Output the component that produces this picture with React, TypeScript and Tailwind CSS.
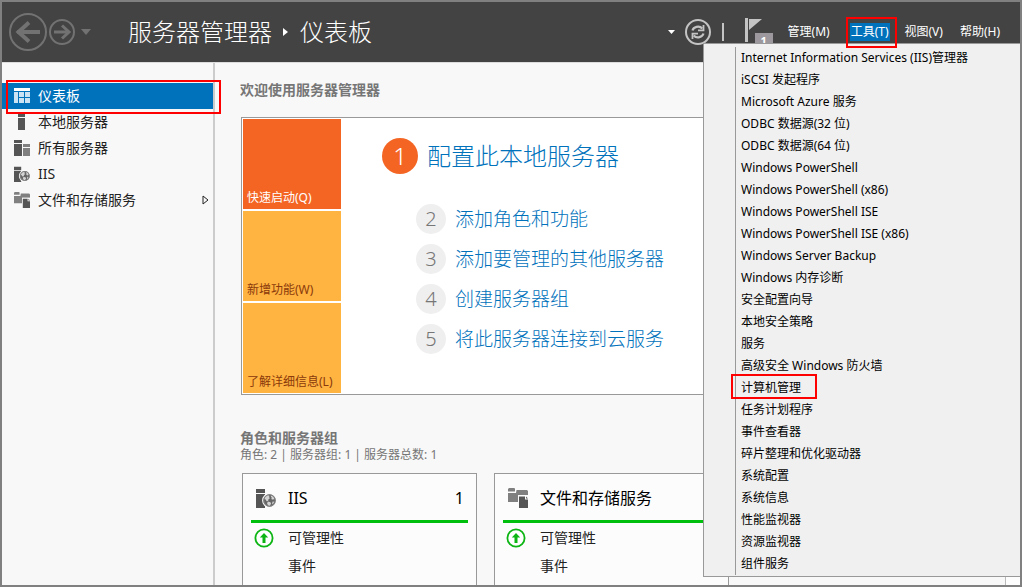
import React from "react";

const tools = [
  "Internet Information Services (IIS)管理器",
  "iSCSI 发起程序",
  "Microsoft Azure 服务",
  "ODBC 数据源(32 位)",
  "ODBC 数据源(64 位)",
  "Windows PowerShell",
  "Windows PowerShell (x86)",
  "Windows PowerShell ISE",
  "Windows PowerShell ISE (x86)",
  "Windows Server Backup",
  "Windows 内存诊断",
  "安全配置向导",
  "本地安全策略",
  "服务",
  "高级安全 Windows 防火墙",
  "计算机管理",
  "任务计划程序",
  "事件查看器",
  "碎片整理和优化驱动器",
  "系统配置",
  "系统信息",
  "性能监视器",
  "资源监视器",
  "组件服务",
];

const steps = ["添加角色和功能", "添加要管理的其他服务器", "创建服务器组", "将此服务器连接到云服务"];

function DashboardIcon() {
  return (
    <svg className="size-4 shrink-0" viewBox="0 0 16 16" shapeRendering="crispEdges" aria-hidden="true">
      <path fill="#fff" d="M0 0h16v3H0z" />
      <path fill="#cce3f3" d="M0 4h4v11H0zM5 4h5v5H5zM11 4h5v5h-5zM5 10h5v5H5zM11 10h5v5h-5z" />
    </svg>
  );
}

function ServerIcon() {
  return (
    <svg className="size-4 shrink-0" viewBox="0 0 16 16" shapeRendering="crispEdges" aria-hidden="true">
      <path fill="#555" d="M4 0h7v3H4zM4 4h7v12H4z" />
    </svg>
  );
}

function ServersIcon() {
  return (
    <svg className="size-4 shrink-0" viewBox="0 0 16 16" shapeRendering="crispEdges" aria-hidden="true">
      <path fill="#555" d="M0 0h8v3H0zM0 4h8v12H0z" />
      <path fill="#808080" d="M9 4h7v3H9zM9 8h7v8H9z" />
    </svg>
  );
}

function IisIcon({ className }: { className: string }) {
  return (
    <svg className={className} viewBox="0 0 20 20" aria-hidden="true">
      <path fill="#555" d="M0 1h9v4H0zM0 6h9v14H0z" />
      <circle cx="13.5" cy="12.5" r="7.4" fill="#fbfbfb" />
      <circle cx="13.5" cy="12.5" r="6.2" fill="#666" />
      <path
        fill="#d4d4d4"
        d="M8.4 10.5c.6-1.800 2-3 3.800-3.400l1.300.8-.6 1.300 1.200.9-1.600 1.200-.3 1.500-1.600.4-.8-1.400zM15.300 7.400c1.500.6 2.500 1.600 3.100 3.200l-1.300 1.200-1.900-.9.700-1.200-1.100-.9zM11.800 13.600l2.600.6.700 1.500-1.500 2.300-1.500-.4-1-2.200zM16.700 13.500l1.500.2-1.300 2.500-.9-.6z"
      />
      <circle cx="13.500" cy="12.500" r="5.700" fill="none" stroke="#888" strokeWidth="1" />
    </svg>
  );
}

function FilesIcon({ className }: { className: string }) {
  return (
    <svg className={className} viewBox="0 0 20 20" aria-hidden="true">
      <path fill="#808080" d="M1 0h5.500l.5 1v2.500H0V1zM8.500 2H19l1 1v11H0V5h8z" />
      <path fill="#fbfbfb" d="M10 7h10v13H10z" />
      <path fill="#555" d="M11 8.500h6v3h3V20h-9z" />
      <path fill="#555" d="M18 8.500l2 2h-2z" />
    </svg>
  );
}

function UpIcon() {
  return (
    <svg className="size-5 shrink-0" viewBox="0 0 20 20" aria-hidden="true">
      <circle cx="10" cy="10" r="8.600" fill="#fff" stroke="#0db514" strokeWidth="1.800" />
      <path fill="#0db514" d="M10 5l4.200 4.500h-2.700V15h-3V9.500H5.800z" />
    </svg>
  );
}

function Header() {
  return (
    <header className="flex h-[61px] shrink-0 items-center border-b border-[#dddddd] bg-[#434343] pl-[7px] pr-5 text-white">
      <button type="button" aria-label="后退">
        <svg className="size-[38px]" viewBox="0 0 38 38" fill="none" stroke="#727272" aria-hidden="true">
          <circle cx="19" cy="19" r="18" strokeWidth="2" />
          <path d="M8 19h23" strokeWidth="4" />
          <path d="M20 9.500L9.500 19L20 28.500" strokeWidth="4" />
        </svg>
      </button>
      <button type="button" aria-label="前进" className="ml-[2px]">
        <svg className="size-[26px]" viewBox="0 0 26 26" fill="none" stroke="#727272" aria-hidden="true">
          <circle cx="13" cy="13" r="12" strokeWidth="2" />
          <path d="M5 13h15" strokeWidth="3" />
          <path d="M13 6.500L20 13L13 19.500" strokeWidth="3" />
        </svg>
      </button>
      <button type="button" aria-label="历史记录" className="ml-[6px]">
        <svg className="h-[6px] w-[10px]" viewBox="0 0 10 6" fill="#727272" aria-hidden="true">
          <path d="M0 0h10L5 6z" />
        </svg>
      </button>
      <h1 className="ml-[37px] flex items-center text-2xl font-light">
        <span>服务器管理器</span>
        <svg className="ml-[11px] mr-[12px] h-2 w-[5px]" viewBox="0 0 5 8" fill="#fff" aria-hidden="true">
          <path d="M0 0l5 4-5 4z" />
        </svg>
        <span>仪表板</span>
      </h1>
      <div className="ml-auto flex items-center">
        <button type="button" aria-label="更多">
          <svg className="h-1 w-[7px]" viewBox="0 0 7 4" fill="#fff" aria-hidden="true">
            <path d="M0 0h7L3.500 4z" />
          </svg>
        </button>
        <button type="button" aria-label="刷新" className="ml-[10px]">
          <svg className="size-[26px]" viewBox="0 0 26 26" fill="none" stroke="#c4c4c4" aria-hidden="true">
            <circle cx="13" cy="13" r="12" strokeWidth="2" />
            <path d="M7.500 11.500c1-3.500 6.500-5.500 9.800-2M18.500 14.500c-1 3.500-6.500 5.500-9.800 2" strokeWidth="2.200" />
            <path d="M18.500 6v5.300h-5.500M7.500 20v-5.300h5.500" strokeWidth="1.800" />
          </svg>
        </button>
        <span className="ml-[11px] h-[18px] w-[2px] bg-[#c4c4c4]" />
        <button type="button" aria-label="通知" className="relative ml-[21px] h-7 w-[28px]">
          <svg className="absolute left-0 top-0 h-6 w-[18px]" viewBox="0 0 18 24" aria-hidden="true">
            <path fill="#c4c4c4" d="M0 0h3v24H0zM4 1h13L4 12z" />
          </svg>
          <span className="absolute left-[10px] top-[15px] h-4 w-[18px] bg-[#9c989e] text-center text-[11px] leading-4 font-bold">
            1
          </span>
        </button>
        <nav aria-label="菜单" className="ml-[15px] flex items-center text-xs leading-[18px]">
          <button type="button">管理(M)</button>
          <button type="button" aria-expanded="true" className="relative ml-5 bg-[#0072bc] px-px">
            工具(T)
            <span className="absolute -bottom-[7px] -left-[4px] -right-[7px] -top-[6px] z-20 border-2 border-[#ff0000]" />
          </button>
          <button type="button" className="ml-[15px]">视图(V)</button>
          <button type="button" className="ml-[17px]">帮助(H)</button>
        </nav>
      </div>
    </header>
  );
}

function NavItem({ icon, label, arrow }: { icon: React.ReactNode; label: string; arrow?: boolean }) {
  return (
    <a href="#" className="flex h-[26px] items-center gap-2 pl-3 pr-1">
      {icon}
      <span>{label}</span>
      {arrow && (
        <svg className="ml-auto h-[10px] w-[7px]" viewBox="0 0 7 10" fill="none" stroke="#222" aria-hidden="true">
          <path d="M1 1l5 4-5 4z" />
        </svg>
      )}
    </a>
  );
}

function Sidebar() {
  return (
    <nav aria-label="导航" className="w-[213px] shrink-0 border-r-2 border-[#cccccc] pt-5 text-sm leading-5 text-[#222222]">
      <a href="#" aria-current="page" className="relative flex h-[26px] items-center gap-2 bg-[#0072bc] pl-3 text-white">
        <DashboardIcon />
        <span>仪表板</span>
        <span className="absolute -bottom-[5px] -right-[8px] -top-[3px] left-1 border-2 border-[#ff0000]" />
      </a>
      <NavItem icon={<ServerIcon />} label="本地服务器" />
      <NavItem icon={<ServersIcon />} label="所有服务器" />
      <NavItem icon={<IisIcon className="size-4 shrink-0" />} label="IIS" />
      <NavItem icon={<FilesIcon className="size-4 shrink-0" />} label="文件和存储服务" arrow />
    </nav>
  );
}

function RoleCard({ icon, title, count }: { icon: React.ReactNode; title: string; count: string }) {
  return (
    <section className="w-[235px] shrink-0 border border-[#999999] bg-[#fcfcfc] px-2 pb-10 text-sm text-[#222222]">
      <h3 className="flex h-[46px] items-center pl-[5px] pr-1 pt-[2px] text-base text-black">
        {icon}
        <span className="ml-3">{title}</span>
        <span className="ml-auto">{count}</span>
      </h3>
      <div className="mb-px h-[3px] bg-[#00bf0d]" />
      <div className="flex h-7 items-center gap-[14px] pl-[3px]">
        <UpIcon />
        <a href="#">可管理性</a>
      </div>
      <div className="flex h-7 items-center pl-[37px]">
        <a href="#">事件</a>
      </div>
    </section>
  );
}

function ToolsMenu() {
  return (
    <div className="absolute right-0 top-[41px] z-10 w-[317px] border border-r-0 border-[#999999] bg-[#f0f0f0] pb-px pl-[31px] pt-[3px]">
      <ul role="menu" className="border-l border-[#999999] pl-[5px] text-xs leading-[22px] text-black">
        {tools.map((name) => (
          <li key={name} role="none" className="relative h-[22px]">
            <button type="button" role="menuitem" className="block whitespace-nowrap">
              {name}
            </button>
            {name === "计算机管理" && (
              <span className="absolute -left-[10px] -top-[3px] h-[25px] w-[86px] border-2 border-[#ff0000]" />
            )}
          </li>
        ))}
      </ul>
    </div>
  );
}

export default function App() {
  return (
    <div className="h-screen border-2 border-[#808080] font-['Noto_Sans','Noto_Sans_CJK_SC',sans-serif]">
      <div className="relative flex h-full flex-col overflow-hidden bg-[#f8f8f8]">
        <Header />
        <div className="flex min-h-0 flex-1">
          <Sidebar />
          <main className="min-w-0 flex-1 overflow-hidden pl-[25px] pt-[17px]">
            <h2 className="text-sm font-bold leading-5 text-[#767676]">欢迎使用服务器管理器</h2>
            <section className="ml-px mt-[17px] flex border border-[#999999] bg-white p-px">
              <div className="flex w-[98px] shrink-0 flex-col gap-[2px] text-xs">
                <button type="button" className="flex h-[90px] items-end bg-[#f46524] px-1 pb-[3px] text-white">
                  快速启动(Q)
                </button>
                <button type="button" className="flex h-[90px] items-end bg-[#ffb340] px-1 pb-[3px] text-[#8a3a0c]">
                  新增功能(W)
                </button>
                <button type="button" className="flex h-[90px] items-end bg-[#ffb340] px-1 pb-[3px] text-[#8a3a0c]">
                  了解详细信息(L)
                </button>
              </div>
              <ol className="pl-[41px] pt-[19px] font-light text-[#0072bc]">
                <li className="mb-[30px] flex items-center gap-[9px] text-2xl">
                  <span className="flex size-9 items-center justify-center rounded-full bg-[#f46524] text-white">1</span>
                  <a href="#" className="leading-9">配置此本地服务器</a>
                </li>
                {steps.map((step, i) => (
                  <li key={step} className="mb-[10px] ml-[34px] flex items-center gap-[9px] text-[19px]">
                    <span className="flex size-[30px] items-center justify-center rounded-full bg-[#efefef] text-xl text-[#767676]">
                      {i + 2}
                    </span>
                    <a href="#" className="leading-[30px]">{step}</a>
                  </li>
                ))}
              </ol>
            </section>
            <h2 className="mt-[34px] text-sm font-bold leading-[18px] text-[#767676]">角色和服务器组</h2>
            <p className="text-xs leading-4 text-[#767676]">角色: 2 | 服务器组: 1 | 服务器总数: 1</p>
            <div className="ml-[2px] mt-[10px] flex gap-[17px]">
              <RoleCard icon={<IisIcon className="size-5 shrink-0" />} title="IIS" count="1" />
              <RoleCard icon={<FilesIcon className="size-5 shrink-0" />} title="文件和存储服务" count="1" />
            </div>
          </main>
          <div className="w-[15px] shrink-0 border-l border-[#bbbbbb] bg-[#fdfdfd]" />
        </div>
        <ToolsMenu />
      </div>
    </div>
  );
}
